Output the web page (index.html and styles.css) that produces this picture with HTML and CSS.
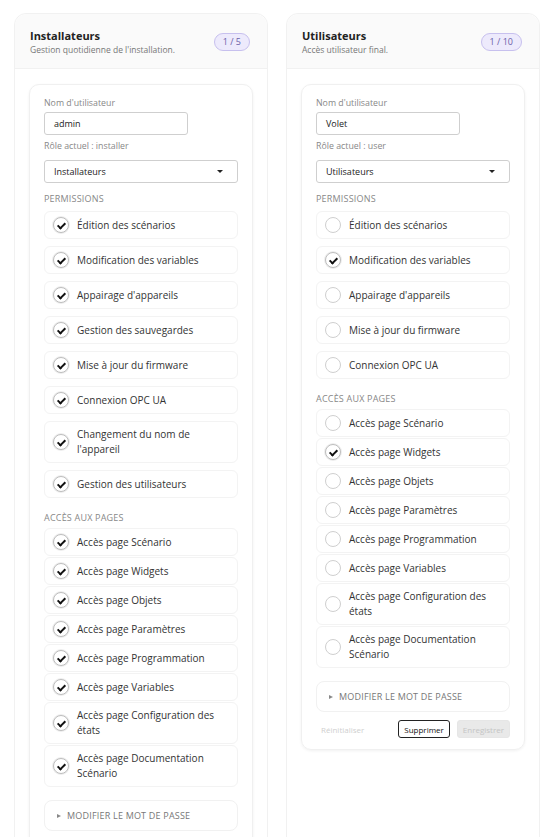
FILE: index.html
```html
<!DOCTYPE html>
<html lang="fr">
<head>
  <meta charset="UTF-8">
  <title>Comptes</title>
  <meta name="viewport" content="width=device-width, initial-scale=1">
  <link rel="stylesheet" href="styles.css">
</head>
<body>
  <div class="board">
    <section class="card">
      <header class="card-head">
        <div>
          <h3 class="card-title">Installateurs</h3>
          <p class="card-sub">Gestion quotidienne de l'installation.</p>
        </div>
        <span class="badge">1 / 5</span>
      </header>
      <div class="panel">
        <div class="field-label">Nom d'utilisateur</div>
        <div class="input">admin</div>
        <div class="role">Rôle actuel : installer</div>
        <div class="select"><span>Installateurs</span><span class="caret"></span></div>

        <div class="section">Permissions</div>
        <ul class="checks perms">
          <li class="check on"><span class="box"></span><span>Édition des scénarios</span></li>
          <li class="check on"><span class="box"></span><span>Modification des variables</span></li>
          <li class="check on"><span class="box"></span><span>Appairage d'appareils</span></li>
          <li class="check on"><span class="box"></span><span>Gestion des sauvegardes</span></li>
          <li class="check on"><span class="box"></span><span>Mise à jour du firmware</span></li>
          <li class="check on"><span class="box"></span><span>Connexion OPC UA</span></li>
          <li class="check on"><span class="box"></span><span>Changement du nom de l'appareil</span></li>
          <li class="check on"><span class="box"></span><span>Gestion des utilisateurs</span></li>
        </ul>

        <div class="section">Accès aux pages</div>
        <ul class="checks pages">
          <li class="check on"><span class="box"></span><span>Accès page Scénario</span></li>
          <li class="check on"><span class="box"></span><span>Accès page Widgets</span></li>
          <li class="check on"><span class="box"></span><span>Accès page Objets</span></li>
          <li class="check on"><span class="box"></span><span>Accès page Paramètres</span></li>
          <li class="check on"><span class="box"></span><span>Accès page Programmation</span></li>
          <li class="check on"><span class="box"></span><span>Accès page Variables</span></li>
          <li class="check on"><span class="box"></span><span>Accès page Configuration des états</span></li>
          <li class="check on"><span class="box"></span><span>Accès page Documentation Scénario</span></li>
        </ul>

        <div class="password"><span class="tri"></span>Modifier le mot de passe</div>

        <div class="actions">
          <button class="btn-link" disabled>Réinitialiser</button>
          <div class="actions-right">
            <button class="btn-outline">Supprimer</button>
            <button class="btn-fill" disabled>Enregistrer</button>
          </div>
        </div>
      </div>
    </section>

    <section class="card">
      <header class="card-head">
        <div>
          <h3 class="card-title">Utilisateurs</h3>
          <p class="card-sub">Accès utilisateur final.</p>
        </div>
        <span class="badge">1 / 10</span>
      </header>
      <div class="panel">
        <div class="field-label">Nom d'utilisateur</div>
        <div class="input">Volet</div>
        <div class="role">Rôle actuel : user</div>
        <div class="select"><span>Utilisateurs</span><span class="caret"></span></div>

        <div class="section">Permissions</div>
        <ul class="checks perms">
          <li class="check"><span class="box"></span><span>Édition des scénarios</span></li>
          <li class="check on"><span class="box"></span><span>Modification des variables</span></li>
          <li class="check"><span class="box"></span><span>Appairage d'appareils</span></li>
          <li class="check"><span class="box"></span><span>Mise à jour du firmware</span></li>
          <li class="check"><span class="box"></span><span>Connexion OPC UA</span></li>
        </ul>

        <div class="section">Accès aux pages</div>
        <ul class="checks pages">
          <li class="check"><span class="box"></span><span>Accès page Scénario</span></li>
          <li class="check on"><span class="box"></span><span>Accès page Widgets</span></li>
          <li class="check"><span class="box"></span><span>Accès page Objets</span></li>
          <li class="check"><span class="box"></span><span>Accès page Paramètres</span></li>
          <li class="check"><span class="box"></span><span>Accès page Programmation</span></li>
          <li class="check"><span class="box"></span><span>Accès page Variables</span></li>
          <li class="check"><span class="box"></span><span>Accès page Configuration des états</span></li>
          <li class="check"><span class="box"></span><span>Accès page Documentation Scénario</span></li>
        </ul>

        <div class="password"><span class="tri"></span>Modifier le mot de passe</div>

        <div class="actions">
          <button class="btn-link" disabled>Réinitialiser</button>
          <div class="actions-right">
            <button class="btn-outline">Supprimer</button>
            <button class="btn-fill" disabled>Enregistrer</button>
          </div>
        </div>
      </div>
    </section>
  </div>
</body>
</html>
```

FILE: styles.css
```css
* { box-sizing: border-box; }
body {
  margin: 0;
  background: #fff;
  font-family: "Open Sans", "Noto Sans", sans-serif;
  color: #333;
}
.board {
  display: grid;
  grid-template-columns: 254px 254px;
  gap: 18px;
  padding: 13px 20px 0 14px;
  align-items: stretch;
}
.card {
  border: 1px solid #f1f1f1;
  border-radius: 12px;
  background: #fff;
  min-height: 840px;
}
.card-head {
  display: flex;
  justify-content: space-between;
  align-items: center;
  padding: 13px 17px 12px 15px;
  background: #fafafa;
  border-bottom: 1px solid #f1f1f1;
  border-radius: 12px 12px 0 0;
}
.card-title {
  margin: 0;
  font-size: 11px;
  line-height: 17px;
  font-weight: 700;
  color: #222;
}
.card-sub {
  margin: 0;
  font-size: 8.5px;
  line-height: 12px;
  color: #777;
}
.badge {
  font-size: 9px;
  line-height: 16px;
  padding: 0 8px;
  border: 1px solid #c7c0ee;
  background: #edeafc;
  color: #6a5fa8;
  border-radius: 9px;
}
.panel {
  margin: 15px 14px 0 14px;
  border: 1px solid #f0f0f0;
  border-radius: 10px;
  padding: 12px 14px 11px;
  box-shadow: 0 1px 3px rgba(0, 0, 0, 0.06);
}
.field-label,
.role {
  font-size: 8.8px;
  line-height: 12px;
  color: #888;
}
.input {
  width: 144px;
  height: 23px;
  margin-top: 3px;
  padding: 0 9px;
  border: 1px solid #cfcfcf;
  border-radius: 3px;
  font-size: 9px;
  line-height: 21px;
  color: #222;
}
.role {
  margin-top: 5px;
}
.select {
  display: flex;
  justify-content: space-between;
  align-items: center;
  height: 23px;
  margin-top: 8px;
  padding: 0 14px 0 9px;
  border: 1px solid #cfcfcf;
  border-radius: 3px;
  font-size: 9px;
  color: #222;
}
.caret {
  width: 0;
  height: 0;
  border-left: 3px solid transparent;
  border-right: 3px solid transparent;
  border-top: 3.5px solid #222;
}
.section {
  margin-top: 10px;
  font-size: 9px;
  line-height: 12px;
  letter-spacing: 0.2px;
  text-transform: uppercase;
  color: #888;
}
.checks {
  list-style: none;
  margin: 6px 0 0;
  padding: 0;
  display: flex;
  flex-direction: column;
}
.perms { gap: 7px; }
.pages { gap: 1px; margin-top: 4px; }
.pages + .password { margin-top: 13px; }
.perms + .section { margin-top: 14px; }
.check {
  display: flex;
  align-items: center;
  gap: 8px;
  padding: 5px 8px;
  border: 1px solid #f3f3f3;
  border-radius: 6px;
  font-size: 10px;
  line-height: 15px;
  color: #333;
}
.box {
  position: relative;
  flex: none;
  width: 16px;
  height: 16px;
  border: 1px solid #cfcfcf;
  border-radius: 50%;
  background: #fff;
}
.check.on .box {
  border-color: #bdbdbd;
  box-shadow: 0 0 0 1px #eee;
}
.check.on .box::after {
  content: "";
  position: absolute;
  left: 5px;
  top: 2.5px;
  width: 3px;
  height: 6px;
  border: solid #111;
  border-width: 0 2px 2px 0;
  transform: rotate(45deg);
}
.password {
  display: flex;
  align-items: center;
  gap: 6px;
  height: 31px;
  padding: 0 12px;
  border: 1px solid #f1f1f1;
  border-radius: 8px;
  font-size: 9px;
  text-transform: uppercase;
  letter-spacing: 0.2px;
  color: #777;
}
.tri {
  width: 0;
  height: 0;
  border-top: 2.5px solid transparent;
  border-bottom: 2.5px solid transparent;
  border-left: 4px solid #888;
}
.actions {
  display: flex;
  justify-content: space-between;
  align-items: center;
  margin-top: 8px;
}
.actions-right {
  display: flex;
  gap: 7px;
}
.actions button {
  font-family: inherit;
  font-size: 8px;
  height: 18px;
  padding: 0 5px;
  border-radius: 3px;
}
.btn-link {
  border: none;
  background: none;
  color: #cfcfcf;
  padding-left: 6px;
}
.btn-outline {
  border: 1px solid #222;
  background: #fff;
  color: #111;
}
.btn-fill {
  border: 1px solid #e6e6e6;
  background: #e9e9e9;
  color: #c4c4c4;
}
```
